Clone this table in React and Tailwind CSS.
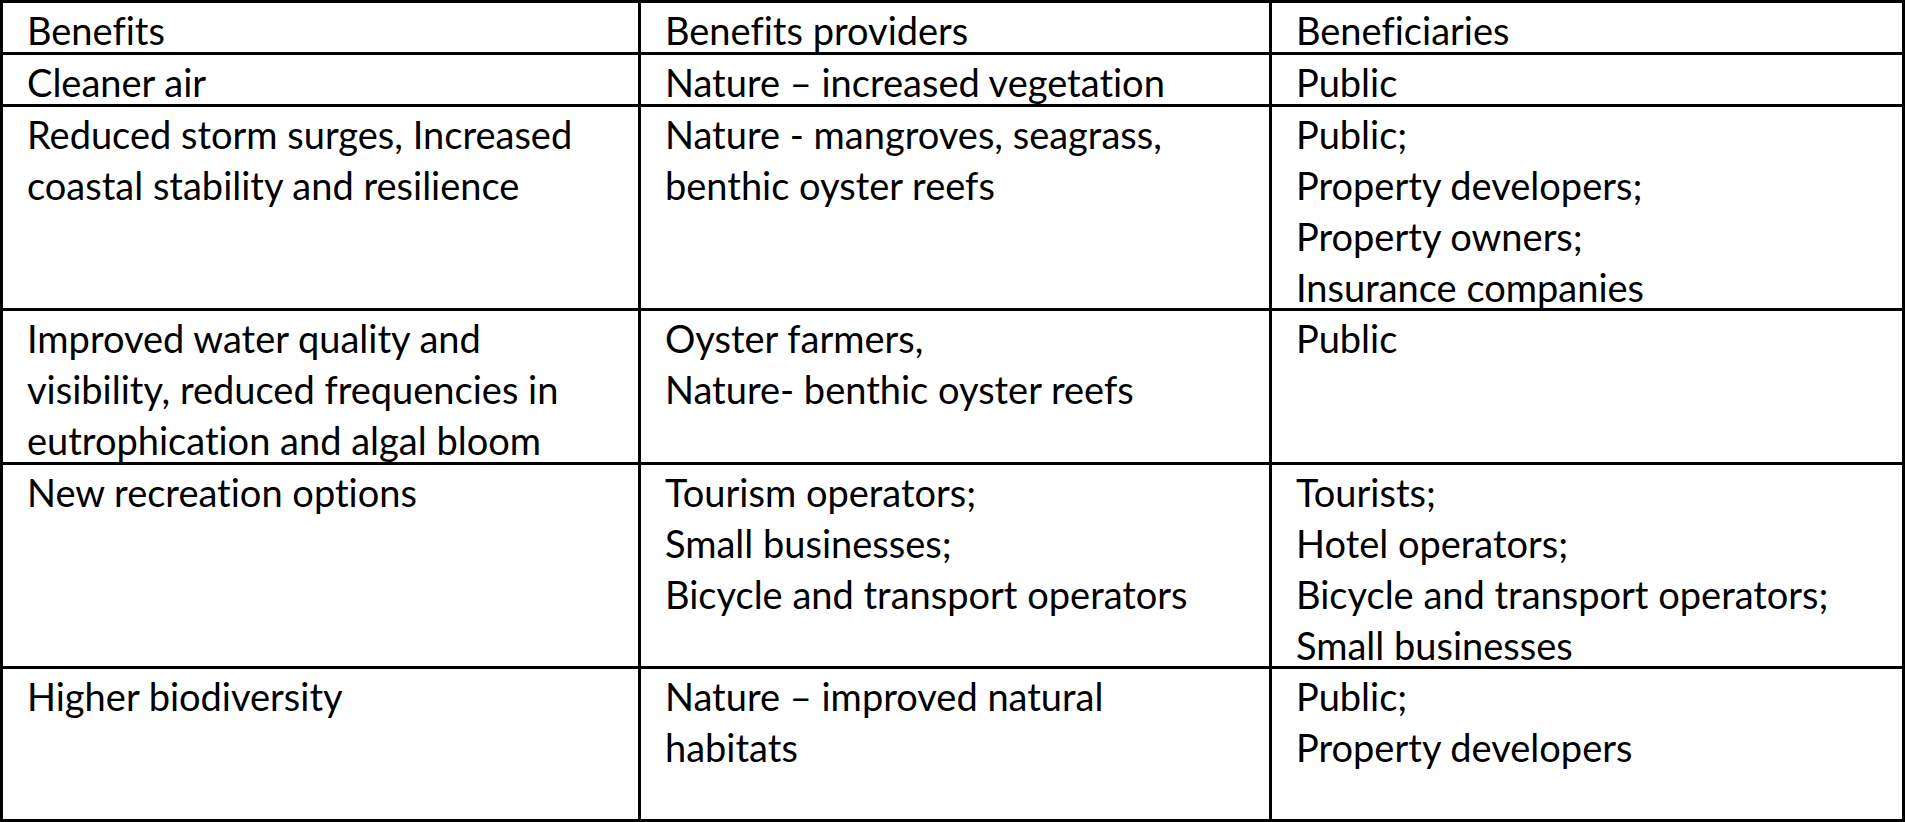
import React from "react";

const rows = [
  {
    h: "h-[52px] border-b-[3px]",
    cells: [["Benefits"], ["Benefits providers"], ["Beneficiaries"]],
  },
  {
    h: "h-[52px] border-b-[3px]",
    cells: [["Cleaner air"], ["Nature – increased vegetation"], ["Public"]],
  },
  {
    h: "h-[204px] border-b-[3px]",
    cells: [
      ["Reduced storm surges, Increased", "coastal stability and resilience"],
      ["Nature - mangroves, seagrass,", "benthic oyster reefs"],
      ["Public;", "Property developers;", "Property owners;", "Insurance companies"],
    ],
  },
  {
    h: "h-[154px] border-b-[3px]",
    cells: [
      ["Improved water quality and", "visibility, reduced frequencies in", "eutrophication and algal bloom"],
      ["Oyster farmers,", "Nature- benthic oyster reefs"],
      ["Public"],
    ],
  },
  {
    h: "h-[204px] border-b-[3px]",
    cells: [
      ["New recreation options"],
      ["Tourism operators;", "Small businesses;", "Bicycle and transport operators"],
      ["Tourists;", "Hotel operators;", "Bicycle and transport operators;", "Small businesses"],
    ],
  },
  {
    h: "h-[150px]",
    cells: [
      ["Higher biodiversity"],
      ["Nature – improved natural", "habitats"],
      ["Public;", "Property developers"],
    ],
  },
];

const cellWidths = [
  "w-[638px] border-r-[3px]",
  "w-[631px] border-r-[3px]",
  "flex-1",
];

export default function App() {
  return (
    <div className="w-[1905px] h-[822px] bg-white overflow-hidden">
      <div
        className="w-[1905px] border-[3px] border-black flex flex-col text-black text-[38px] leading-[51px] [font-variant-ligatures:none]"
        style={{ fontFamily: "Lato, 'Open Sans', sans-serif" }}
      >
        {rows.map((r, i) => (
          <div key={i} className={`flex border-black ${r.h}`}>
            {r.cells.map((lines, j) => (
              <div
                key={j}
                className={`${cellWidths[j]} border-black pl-[24px] pt-[2px] whitespace-nowrap`}
              >
                {lines.map((l, k) => (
                  <div key={k}>{l}</div>
                ))}
              </div>
            ))}
          </div>
        ))}
      </div>
    </div>
  );
}
